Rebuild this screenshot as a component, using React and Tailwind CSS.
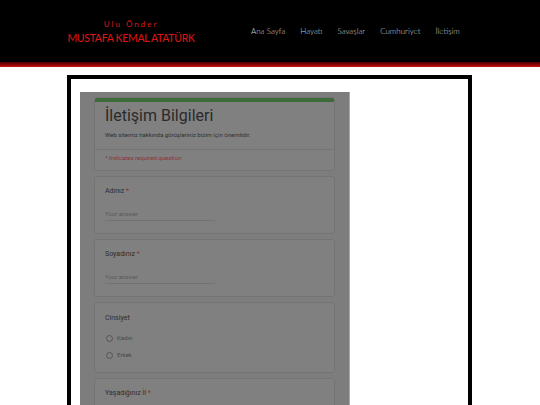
import React from "react";

const font = { fontFamily: "Roboto, 'Noto Sans', sans-serif" };

function Card({ children, className = "" }) {
  return (
    <div className={`rounded-[3px] border border-[#747474] bg-[#808080] ${className}`}>{children}</div>
  );
}

function TextQuestion({ label }) {
  return (
    <Card className="h-[58px] px-[10px] pt-[10px]">
      <div className="text-[7px] leading-[9px] text-[#2e2e2e]">
        {label} <span className="text-[#8b3232]">*</span>
      </div>
      <div className="mt-[14px] w-[110px] border-b border-[#727272] pb-[2px] text-[6px] leading-[8px] text-[#5a5a5a]">
        Your answer
      </div>
    </Card>
  );
}

function Radio({ label }) {
  return (
    <div className="flex h-[8px] items-center gap-[4px]">
      <span className="ml-[1px] block h-[7px] w-[7px] rounded-full border border-[#555]" />
      <span className="text-[6px] leading-[8px] text-[#4a4a4a]">{label}</span>
    </div>
  );
}

export default function App() {
  const nav = ["Ana Sayfa", "Hayatı", "Savaşlar", "Cumhuriyet", "İletişim"];
  return (
    <div className="h-[405px] w-[540px] overflow-hidden bg-white" style={{ fontFamily: "Lato, sans-serif" }}>
      {/* header */}
      <header className="flex h-[62px] items-center bg-black">
        <div className="ml-[66px] flex w-[130px] flex-col items-center">
          <div className="text-[8px] leading-[10px] tracking-[2px] text-[#d61a1a]">Ulu Önder</div>
          <div className="mt-[3px] whitespace-nowrap text-[10.5px] leading-[12px] tracking-[-0.3px] text-[#e01414]">
            MUSTAFA KEMAL ATATÜRK
          </div>
        </div>
        <nav className="ml-[55px] flex gap-[15px] text-[8px] font-light text-[#d0d0d0]">
          {nav.map((n) => (
            <span key={n} className="text-[#d0d0d0]">
              {n}
            </span>
          ))}
        </nav>
      </header>
      <div className="h-[5px] bg-gradient-to-b from-[#4a0000] to-[#c81414]" />

      {/* content frame */}
      <div className="ml-[67px] mt-[8px] h-[400px] w-[405px] border-[4px] border-b-0 border-black pl-[9px] pt-[13px]">
        <div className="h-[400px] w-[270px] border-r border-[#a8a8a8] bg-[#7d7d7d] px-[14px] pt-[5px]" style={font}>
          <div className="flex flex-col gap-[5px]">
            {/* title card */}
            <Card className="overflow-hidden">
              <div className="h-[4px] bg-[#3c6a38]" />
              <div className="px-[10px] pt-[4px]">
                <div className="text-[16px] leading-[20px] text-[#2a2a2a]">İletişim Bilgileri</div>
                <div className="mt-[5px] pb-[10px] text-[6px] leading-[8px] text-[#303030]">
                  Web sitemiz hakkında görüşleriniz bizim için önemlidir.
                </div>
              </div>
              <div className="border-t border-[#747474] px-[10px] pb-[8px] pt-[4px] text-[6px] leading-[8px] text-[#8b3434]">
                * Indicates required question
              </div>
            </Card>

            <TextQuestion label="Adınız" />
            <TextQuestion label="Soyadınız" />

            <Card className="h-[71px] px-[10px] pt-[11px]">
              <div className="text-[7px] leading-[9px] text-[#2e2e2e]">Cinsiyet</div>
              <div className="mt-[11px] flex flex-col gap-[9px]">
                <Radio label="Kadın" />
                <Radio label="Erkek" />
              </div>
            </Card>

            <Card className="h-[60px] px-[10px] pt-[10px]">
              <div className="text-[7px] leading-[9px] text-[#2e2e2e]">
                Yaşadığınız İl <span className="text-[#8b3232]">*</span>
              </div>
            </Card>
          </div>
        </div>
      </div>
    </div>
  );
}
